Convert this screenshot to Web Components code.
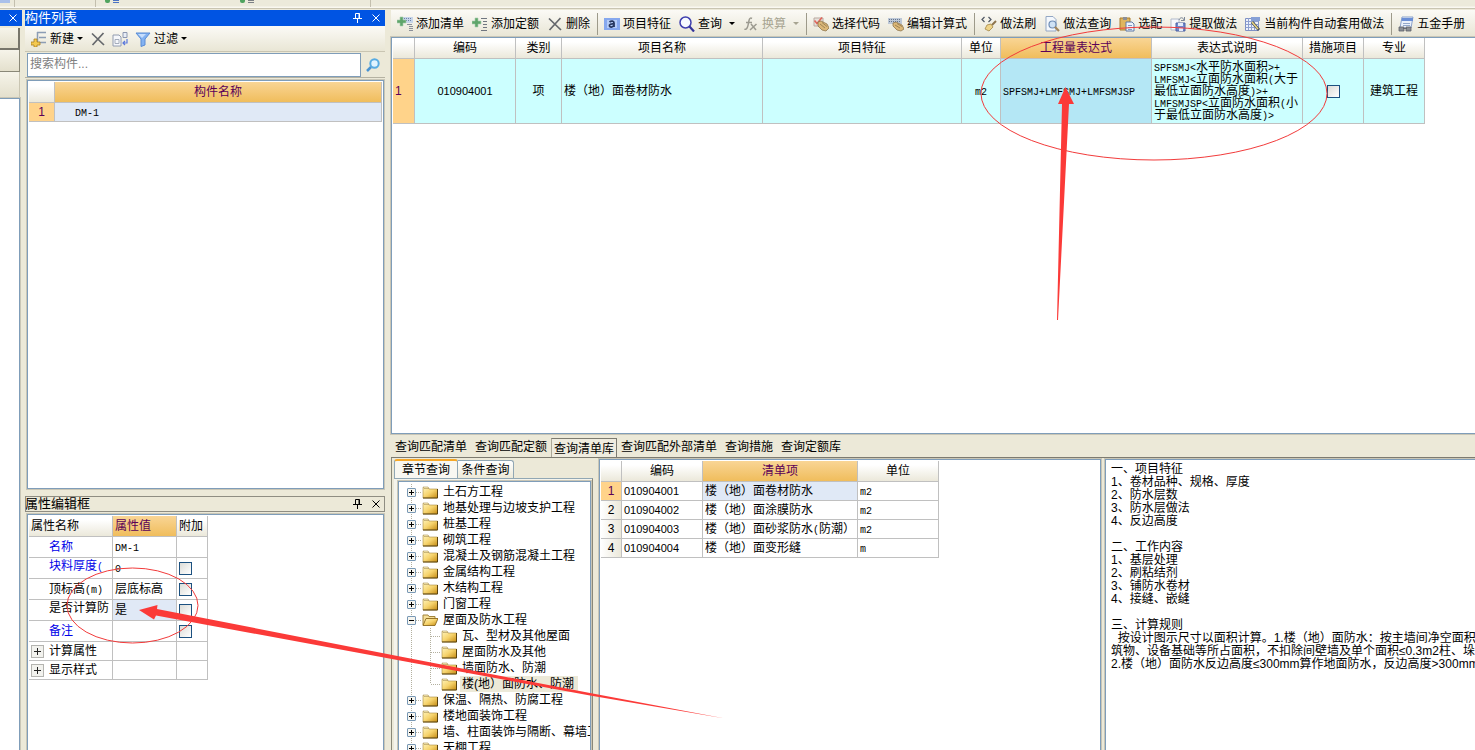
<!DOCTYPE html>
<html lang="zh-CN">
<head>
<meta charset="utf-8">
<title>构件做法</title>
<style>
html, body { height: 100%; }
body { margin: 0; overflow: hidden; background: #ece9d8; color: #000; font: 12px/16px "Liberation Sans", "Noto Sans CJK SC", sans-serif; }
</style>
</head>
<body>
<app-shell></app-shell>
<script>
const SHARED = `
*{box-sizing:border-box}
:host{display:block}
button,input{font:inherit;color:inherit;margin:0;padding:0;border:0;background:none;border-radius:0;outline:0}
button{white-space:nowrap}
code{font:10px/0 "Liberation Mono","Noto Sans CJK SC",monospace}
table{border-collapse:separate;border-spacing:0;table-layout:fixed}
th,td{font-weight:400;padding:0 2px;border-right:1px solid #c0c0c0;border-bottom:1px solid #c0c0c0;overflow:hidden;white-space:nowrap;text-align:left}
thead th{height:21px;text-align:center;background:linear-gradient(#fff 20%,#ebe8da)}
thead th.on{background:linear-gradient(#f9d595,#f0bd5c);color:#5a0058}
tbody th{text-align:center;background:linear-gradient(90deg,#fff,#ebe8da)}
tbody th.on{background:#ffd38a;color:#5a0058}
td.sel{background:#e0e9f6}
.frame{background:#fff;border:1px solid #7f9db9;outline:1px solid #c9c6b6;overflow:hidden}
input[type=checkbox]{appearance:none;display:block;width:13px;height:13px;border:1px solid #1c5180;background:linear-gradient(135deg,#dcdcd7,#fff)}
`;

const ICONS = {
  addList: '<path d="M6 1h10v6H6z" fill="#c6d5ea"/><path d="M7 2.5h8M7 4.5h8" stroke="#6d82a8" stroke-dasharray="1 1"/><path d="M3 1h3v3h3v3H6v3H3V7H0V4h3z" fill="#5fa56a" stroke="#a9cfae" stroke-width=".6"/><path d="M10 8.5h5M12 10.5h4M12 12.500h4M12 14.500h4" stroke="#8b8f98"/>',
  addQuota: '<path d="M3 2h3v3h3v3H6v3H3V8H0V5h3z" fill="#5fa56a" stroke="#a9cfae" stroke-width=".6"/><path d="M9 2.500h6M11 5.500h4M11 8.500h4M11 11.500h4M9 14.500h6" stroke="#707680"/>',
  del: '<path d="M2 2.500 14 14M13.500 2 2.500 14" stroke="#65686c" stroke-width="1.700" fill="none"/>',
  feature: '<path d="M0 2h16v12H0z" fill="#86a8ee"/><path d="M3 4h10v8H3z" fill="#b5ccf7"/><path d="M5.500 6c2-1.500 4.500-1 4.500 1v4M10 8C7 7.500 5 8.500 5.500 10s3 1.500 4.500-.5" fill="none" stroke="#26375f" stroke-width="1.800"/>',
  find: '<circle cx="6.500" cy="6.500" r="5.500" fill="#f7faff" stroke="#3f3fae" stroke-width="1.500"/><path d="m10.500 10.500 4.500 5" stroke="#34349a" stroke-width="2.200"/>',
  fx: '<path d="M9 2.500C6.500 1 6 4 5.500 7S4 14.500 1.500 13M3 6.500h6M8 8l5 6M13.500 8 7 14" fill="none" stroke="#9c9a90" stroke-width="1.500"/>',
  pick: '<path d="M1 2h9v8H1z" fill="#e6e2dc" stroke="#b9a9a0"/><path d="m1.500 4.500 2.500 3 5-6" fill="none" stroke="#e2655a" stroke-width="1.600"/><path d="m5 6 3-1 6 3 2 4-3 3-4-1-4-4z" fill="#dcb878" stroke="#8f764b" stroke-width=".8"/><path d="m7 8 5 4M9 6.500l5 4" stroke="#8f764b" stroke-width=".8"/>',
  edit: '<path d="M0 2h14v6H0z" fill="#bdc8d7"/><path d="M1 3.500h12M1 5.500h12" stroke="#66758d" stroke-dasharray="1 1"/><path d="m5 7 3-1 6 3 2 4-3 2-4-1-4-4z" fill="#dcb878" stroke="#8f764b" stroke-width=".8"/><path d="m7 9 5 3M9 7.500l5 3" stroke="#8f764b" stroke-width=".8"/>',
  brush: '<path d="M3.500 1 1 3.500 3.500 6M7.500 1 10 3.500 7.500 6" fill="none" stroke="#4e5663" stroke-width="1.200"/><path d="m15 5-4 4" stroke="#8d744c" stroke-width="2"/><path d="m6 9 4-1 2 3-4 4-4-2z" fill="#efd489" stroke="#a28544" stroke-width=".8"/>',
  look: '<path d="M2 .5h7l3 3V15H2z" fill="#f4f8fd" stroke="#93a7c4"/><circle cx="8.500" cy="8.500" r="3.500" fill="#cfe2f5" stroke="#6e8db5" stroke-width="1.200"/><path d="m11 11 4 4" stroke="#a2855b" stroke-width="2.200"/>',
  match: '<path d="M1 2h10v12H1z" fill="#dfb55d" stroke="#a97c2f"/><path d="M4 1h4v3H4z" fill="#8c8f96"/><path d="M7 6h6l2 2v7H7z" fill="#eef4fc" stroke="#5f7ba8"/><path d="M9 9.500h4M9 11.500h4M9 13.500h4" stroke="#7d99c5"/>',
  extract: '<path d="M1 3h8v11H1z" fill="#f6f8fc" stroke="#b1bacb"/><path d="M6 7h9v8H6z" fill="#6f88cf" stroke="#4c62a3"/><path d="M8 7h5v3H8zM9 12h4v3H9z" fill="#e4ebfa"/><path d="M9 4c1-3 4-3 5 0M14.500 1v3.500H11" fill="none" stroke="#7c8797"/>',
  auto: '<path d="M.5 2.500h13v12H.5z" fill="#eef2fb" stroke="#7e90c4"/><path d="M.5 5.500h13M.5 8.500h13M.5 11.500h13M3.500 2v12M6.500 2v12M9.500 2v12" stroke="#8ea0d0"/><path d="M6 1h9v4H6z" fill="#86a0d6"/><path d="m7 6 7 8" stroke="#4a5161" stroke-width="3"/><path d="m7 6 6 7" stroke="#ead57f" stroke-width="1.500"/>',
  manual: '<path d="M4 1h11l-2 11H2z" fill="#e9f0fb" stroke="#8ba2cb"/><path d="M4 2h11v3H3.500z" fill="#6b8fd6"/><path d="M5 7.500h7M5 9.500h7" stroke="#92a7cb"/><path d="M1 11h5v4H1zM8 11h5v4H8zM5 12.500h4" fill="#8a8e94" stroke="#5d6168" stroke-width=".8"/>',
  fresh: '<path d="M6 1.500h9M8 6.500h7M8 11.500h7M6.500 1v11" fill="none" stroke="#8c9db5" stroke-width="1.500"/><path d="M3 8h3v3h3v3H6v2H3v-2H0v-3h3z" fill="#f4c950" stroke="#a98121" stroke-width=".8"/>',
  copy: '<path d="M1 4h6l2 2v9H1z" fill="#f5f7fb" stroke="#929cb0"/><path d="M3 8.500h4v4H3z" fill="none" stroke="#a4acbb"/><path d="M11 1.500h4v5h-4z" fill="#e8edf6" stroke="#8d98b0"/><path d="M15 8v4h-4m2-2-2 2 2 2" fill="none" stroke="#5a78dc" stroke-width="1.200"/>',
  filter: '<path d="M1 2h14l-5 6v6l-4 1.500V8z" fill="#83b2f1" stroke="#5a8cd4"/><path d="M3 3h8L7 7z" fill="#c7defd"/>',
  search: '<circle cx="9.500" cy="6.500" r="4.200" fill="#dff3ff" stroke="#57abe2" stroke-width="2"/><path d="m6 10-4 4" stroke="#4a94d2" stroke-width="2.500"/>',
  folder: '<path d="M1 3.500h5l1 1.500h8.500v9H1z" fill="url(#g)" stroke="#a98c42" stroke-width=".6"/><path d="M1 3h5l1 1.500H2z" fill="#fff2bd" stroke="#a79056" stroke-width=".6"/><path d="M15.500 5v9H1" fill="none" stroke="#5b430d"/>',
  open: '<path d="M1 13V3h5l1 1.500h6V7" fill="#f5df98" stroke="#a1843c"/><path d="m1 13.500 3-7h12l-3 7z" fill="url(#g)" stroke="#8d6a1c" stroke-width=".9"/>',
  pin: '<path d="M5.500 3.500h4v5h-4zM3 8.500h9M7.500 9v4M9 3.500v5" fill="none" stroke="currentColor" stroke-width="1"/>',
  close: '<path d="m4.500 4.500 7 7M11.500 4.500l-7 7" fill="none" stroke="currentColor"/>'
};

function define(name, css, html) {
  customElements.define(name, class extends HTMLElement {
    constructor() { super(); this.attachShadow({ mode: 'open' }); }
    connectedCallback() {
      if (this.shadowRoot.firstChild) return;
      const t = document.createElement('template');
      t.innerHTML = `<style>${SHARED}${css}</style>${typeof html === 'function' ? html(this) : html}`;
      this.shadowRoot.append(t.content.cloneNode(true));
    }
  });
}

define('ui-icon', ':host{display:block;flex:none;width:16px;height:16px}svg{display:block}',
  el => `<svg width="16" height="16" viewBox="0 0 16 16" fill="none" aria-hidden="true"><defs><linearGradient id="g" x1="0" y1="0" x2="1" y2="1"><stop offset="0" stop-color="#fff4ba"/><stop offset=".5" stop-color="#f6d36c"/><stop offset="1" stop-color="#c48a12"/></linearGradient></defs>${ICONS[el.getAttribute('name')] || ''}</svg>`);

define('tool-button', `
:host{flex:none}
button{display:flex;align-items:center;gap:3px;height:24px;padding:0 4px}
button:disabled{color:#a7a491}
.caret{margin-left:4px;border:3px solid transparent;border-top-color:currentColor;border-bottom:0}
:host([tight]) .caret{margin-left:0}
:host([name]) button{padding:0 3px;gap:0}`,
  el => `<button ${el.hasAttribute('disabled') ? 'disabled' : ''} aria-label="${el.textContent || el.getAttribute('name')}"><ui-icon name="${el.getAttribute('icon')}"></ui-icon><slot></slot>${el.hasAttribute('menu') ? '<span class="caret"></span>' : ''}</button>`);

define('tool-separator', ':host{flex:none;width:1px;height:22px;margin:0 2px 0 3px;background:#9d9a8a}', '');

define('panel-title', `
:host{flex:none;display:flex;align-items:center;height:16px;overflow:hidden;font-size:13px;color:#000;outline:1px solid #8f8d82;outline-offset:-1px}
:host([active]){background:#0054e3;color:#fff;outline:0}
span{flex:1;white-space:nowrap}
button{width:18px;height:16px;display:flex;justify-content:center}`,
  el => `<span><slot></slot></span>${el.hasAttribute('pinned') ? '<button aria-label="固定"><ui-icon name="pin"></ui-icon></button>' : ''}<button aria-label="关闭"><ui-icon name="close"></ui-icon></button>`);

define('top-strip', `
:host{display:flex;height:9px;border-bottom:1px solid #c9c5b2;background:linear-gradient(#eceadb 70%,#fdfcf7);overflow:hidden}
i{flex:none;height:7px}
.a{width:10px;height:3px;background:#a9c0ea}.l{width:1px;background:#c3bfae}
.p{width:5px;height:3px;background:#4fa35f;border-radius:0 0 2px 2px}.b{width:6px;height:3px;margin-left:3px;border-bottom:1px solid #4a72c4;border-top:1px solid #4a72c4}
.g{border-color:#7b7f85}`,
  `<i class="a"></i><i class="l" style="margin-left:4px"></i><i class="l" style="margin-left:80px"></i><i class="p" style="margin-left:9px"></i><i class="b"></i><i class="p" style="margin-left:121px"></i><i class="b g"></i><i class="l" style="margin-left:116px"></i>`);

define('side-strip', `
:host{display:flex;flex-direction:column;min-height:0}
.bar{height:22px;margin:0 2px 0 0;border-right:1px solid #8a8878;border-bottom:1px solid #8a8878;background:linear-gradient(#f6f4ea,#e4e0cd)}
.first{margin-top:2px;border-width:2px;border-color:#77756a;border-top:0;border-left:0;border-style:solid}
.tall{height:26px;border-color:#c9c5b2}
.frame{flex:1;margin-right:2px;border-left:0;border-bottom:0}`,
  `<panel-title active></panel-title><div class="bar first"></div><div class="bar"></div><div class="bar tall"></div><div class="frame"></div>`);

define('component-list', `
:host{display:flex;flex-direction:column;min-height:0}
nav{display:flex;align-items:center;height:26px;background:linear-gradient(#fbfaf6,#e9e6d5);border-bottom:1px solid #c9c5b2;padding:0 2px}
form{display:flex;height:26px;margin:0;border-bottom:1px solid #b5b2a2;padding:1px 0 0 2px}
input{flex:1;min-width:0;height:24px;background:#fff;border:1px solid #7f9db9;padding:0 2px 2px}
input::placeholder{color:#808080;opacity:1}
form button{width:24px;display:flex;align-items:center;justify-content:center}
.frame{flex:1;margin:2px 1px 1px 2px;padding:1px}
table{width:100%}
td{height:19px;padding-left:20px}`,
  `<panel-title active pinned>构件列表</panel-title>
  <nav><tool-button icon="fresh" menu tight>新建</tool-button><tool-button icon="del" name="删除构件"></tool-button><tool-button icon="copy" name="复制构件"></tool-button><tool-button icon="filter" menu tight>过滤</tool-button></nav>
  <form><input type="text" placeholder="搜索构件..." aria-label="搜索构件"><button type="button" aria-label="搜索"><ui-icon name="search"></ui-icon></button></form>
  <div class="frame"><table><colgroup><col style="width:26px"><col></colgroup>
  <thead><tr><th></th><th class="on" scope="col">构件名称</th></tr></thead>
  <tbody><tr><th class="on" scope="row">1</th><td class="sel"><code>DM-1</code></td></tr></tbody></table></div>`);

const prop = (name, value, o = {}) => `<tr><td class="n ${o.link ? 'link' : ''} ${o.top ? 'top' : ''}">${name}</td><td class="${o.sel ? 'sel' : ''}">${value}</td><td>${o.check ? `<input type="checkbox" aria-label="附加">` : ''}</td></tr>`;
const group = name => `<tr class="g"><td><div><button aria-label="展开"></button>${name}</div></td><td></td><td></td></tr>`;
define('property-editor', `
:host{display:flex;flex-direction:column;min-height:0}
.frame{flex:1;margin:2px 1px 0 2px;padding:1px;border-bottom:0}
table{width:179px}
thead th{text-align:left}
td{height:21px}
.g td{height:19px}
.n{padding-left:20px}
.top{vertical-align:top;line-height:16px}
.link{color:#0000e8}
.g div{display:flex;align-items:center;gap:5px}
.g button{width:13px;height:13px;border:1px solid #b4b4b0;background:linear-gradient(#222,#222) center/7px 1px no-repeat,linear-gradient(#222,#222) center/1px 7px no-repeat,#f2f2ee}`,
  `<panel-title pinned>属性编辑框</panel-title>
  <div class="frame"><table><colgroup><col style="width:84px"><col style="width:64px"><col style="width:31px"></colgroup>
  <thead><tr><th scope="col">属性名称</th><th class="on" scope="col">属性值</th><th scope="col">附加</th></tr></thead>
  <tbody>${prop('名称', '<code>DM-1</code>', { link: 1 })}${prop('块料厚度<code>(</code>', '<code>0</code>', { link: 1, top: 1, check: 1 })}${prop('顶标高<code>(m)</code>', '层底标高', { check: 1 })}${prop('是否计算防', '是', { top: 1, sel: 1, check: 1 })}${prop('备注', '', { link: 1, check: 1 })}${group('计算属性')}${group('显示样式')}</tbody></table></div>`);

define('main-toolbar', `
:host{flex:none;display:flex;align-items:center;height:27px;padding:0 2px;overflow:hidden;background:linear-gradient(#fbfaf6,#e8e5d4)}`,
  `<tool-button icon="addList">添加清单</tool-button><tool-button icon="addQuota">添加定额</tool-button><tool-button icon="del">删除</tool-button><tool-separator></tool-separator>
  <tool-button icon="feature">项目特征</tool-button><tool-button icon="find" menu>查询</tool-button><tool-button icon="fx" menu disabled>换算</tool-button><tool-separator></tool-separator>
  <tool-button icon="pick">选择代码</tool-button><tool-button icon="edit">编辑计算式</tool-button><tool-separator></tool-separator>
  <tool-button icon="brush">做法刷</tool-button><tool-button icon="look">做法查询</tool-button><tool-button icon="match">选配</tool-button><tool-button icon="extract">提取做法</tool-button><tool-button icon="auto">当前构件自动套用做法</tool-button><tool-separator></tool-separator>
  <tool-button icon="manual">五金手册</tool-button>`);

define('bill-grid', `
:host{min-height:0;display:flex}
.frame{flex:1;padding:0 1px;border-right:0}
table{width:1032px}
td,tbody th{height:65px}
td{background:#ccffff}
td.c{text-align:center}
td.cur{background:#b4e7f5}
td.d{white-space:normal;line-height:12px}
tbody th.on{text-align:left}
input[type=checkbox]{margin:0 auto}`,
  `<div class="frame"><table><colgroup>${[22, 101, 46, 201, 199, 39, 151, 151, 61, 61].map(w => `<col style="width:${w}px">`).join('')}</colgroup>
  <thead><tr><th></th><th scope="col">编码</th><th scope="col">类别</th><th scope="col">项目名称</th><th scope="col">项目特征</th><th scope="col">单位</th><th scope="col" class="on">工程量表达式</th><th scope="col">表达式说明</th><th scope="col">措施项目</th><th scope="col">专业</th></tr></thead>
  <tbody><tr><th class="on" scope="row">1</th><td class="c" style="font-size:11px">010904001</td><td class="c">项</td><td>楼（地）面卷材防水</td><td></td><td class="c"><code>m2</code></td><td class="cur"><code>SPFSMJ+LMFSMJ+LMFSMJSP</code></td>
  <td class="d"><code>SPFSMJ&lt;</code>水平防水面积<code>&gt;+</code><br><code>LMFSMJ&lt;</code>立面防水面积<code>(</code>大于<br>最低立面防水高度<code>)&gt;+</code><br><code>LMFSMJSP&lt;</code>立面防水面积<code>(</code>小<br>于最低立面防水高度<code>)&gt;</code></td><td><input type="checkbox" aria-label="措施项目"></td><td class="c">建筑工程</td></tr></tbody></table></div>`);

define('query-tabs', `
:host{flex:none;display:flex;align-items:flex-end;height:24px;border-bottom:1px solid #7d7b70;overflow:hidden}
button{flex:none;height:20px;padding:0 4px}
button[aria-selected=true]{height:19px;padding:2px 2px 0;border:1px solid #7d7b70;border-bottom:0;border-left-color:#aca899;background:#efecdf}`,
  `<button role="tab">查询匹配清单</button><button role="tab">查询匹配定额</button><button role="tab" aria-selected="true">查询清单库</button><button role="tab">查询匹配外部清单</button><button role="tab">查询措施</button><button role="tab">查询定额库</button>`);

define('tree-node', `
:host{display:block}
.row{display:flex;align-items:center;height:16px;white-space:nowrap;background:repeating-linear-gradient(#b3b09f 0 1px,transparent 1px 2px) 12px 0/1px 100% no-repeat}
.exp{flex:none;width:9px;height:9px;margin-left:8px;border:1px solid #7898b5;border-radius:1px;background:linear-gradient(#000,#000) center/5px 1px no-repeat,linear-gradient(#000,#000) center/1px 5px no-repeat,#f6f5ef}
.open .exp{background:linear-gradient(#000,#000) center/5px 1px no-repeat,#f6f5ef}
.dots{flex:none;width:5px;height:1px;margin-right:1px;background:repeating-linear-gradient(90deg,#b3b09f 0 1px,transparent 1px 2px)}
.leaf{background:repeating-linear-gradient(#b3b09f 0 1px,transparent 1px 2px) 12px 0/1px 100% no-repeat,repeating-linear-gradient(#b3b09f 0 1px,transparent 1px 2px) 31px 0/1px 100% no-repeat}
.leaf.sel{background-size:1px 100%,1px 50%}
.leaf .dots{width:9px;margin-left:32px}
.t{margin-left:3px;padding:0 2px;line-height:16px}
.sel .t{background:#ece9d8;padding-right:4px}`,
  el => {
    const leaf = el.hasAttribute('leaf'), open = el.hasAttribute('open');
    return `<div class="row ${leaf ? 'leaf' : ''} ${open ? 'open' : ''} ${el.hasAttribute('selected') ? 'sel' : ''}">${leaf ? '' : '<button class="exp" aria-label="展开"></button>'}<span class="dots"></span><ui-icon name="${open ? 'open' : 'folder'}"></ui-icon><span class="t"><slot></slot></span></div>`;
  });

define('chapter-tree', `
:host{display:flex;flex-direction:column;min-height:0;padding:1px 2px 0 2px;border-left:1px solid #8a8878}
.tabs{display:flex;align-items:flex-end;height:19px}
.tabs button{height:18px;width:56px;border:1px solid #91a7b4;border-bottom:0;border-left:0;border-radius:0 3px 0 0;background:linear-gradient(#fff,#ece9d8)}
.tabs button[aria-selected=true]{width:64px;height:19px;border-top:2px solid #f6a828;border-left:1px solid #91a7b4;border-radius:3px 3px 0 0;background:#f8f7f1}
.page{flex:1;min-height:0;display:flex;border-right:1px solid #8a8878;border-top:1px solid #91a7b4;padding:2px 1px 0 4px;background:#f5f4ec}
.frame{flex:1;min-width:0;padding-top:2px;border-bottom:0}`,
  `<div class="tabs" role="tablist"><button role="tab" aria-selected="true">章节查询</button><button role="tab">条件查询</button></div>
  <div class="page"><div class="frame">${['土石方工程', '地基处理与边坡支护工程', '桩基工程', '砌筑工程', '混凝土及钢筋混凝土工程', '金属结构工程', '木结构工程', '门窗工程'].map(t => `<tree-node>${t}</tree-node>`).join('')}<tree-node open>屋面及防水工程</tree-node><tree-node leaf>瓦、型材及其他屋面</tree-node><tree-node leaf>屋面防水及其他</tree-node><tree-node leaf>墙面防水、防潮</tree-node><tree-node leaf selected>楼(地）面防水、防潮</tree-node>${['保温、隔热、防腐工程', '楼地面装饰工程', '墙、柱面装饰与隔断、幕墙工程', '天棚工程'].map(t => `<tree-node>${t}</tree-node>`).join('')}</div></div>`);

const result = (n, code, name, unit) => `<tr><th scope="row" class="${n === 1 ? 'on' : ''}">${n}</th><td class="k">${code}</td><td class="${n === 1 ? 'sel' : ''}">${name}</td><td><code>${unit}</code></td></tr>`;
define('result-grid', `
:host{display:flex;min-height:0;min-width:0}
.frame{flex:1;padding:1px;border-bottom:0}
table{width:338px}
td{height:19px}
.k{font-size:11px}`,
  `<div class="frame"><table><colgroup><col style="width:21px"><col style="width:81px"><col style="width:155px"><col style="width:81px"></colgroup>
  <thead><tr><th></th><th scope="col">编码</th><th scope="col" class="on">清单项</th><th scope="col">单位</th></tr></thead>
  <tbody>${result(1, '010904001', '楼（地）面卷材防水', 'm2')}${result(2, '010904002', '楼（地）面涂膜防水', 'm2')}${result(3, '010904003', '楼（地）面砂浆防水<code>(</code>防潮）', 'm2')}${result(4, '010904004', '楼（地）面变形缝', 'm')}</tbody></table></div>`);

define('rule-text', `
:host{display:flex;min-height:0;min-width:0}
.frame{flex:1;min-width:0;padding:3px 0 0 5px;border-right:0;border-bottom:0}
p{margin:0 0 13px;line-height:13px;white-space:pre}`,
  `<div class="frame"><p>一、项目特征
1、卷材品种、规格、厚度
2、防水层数
3、防水层做法
4、反边高度</p><p>二、工作内容
1、基层处理
2、刷粘结剂
3、铺防水卷材
4、接缝、嵌缝</p><p>三、计算规则
  按设计图示尺寸以面积计算。1.楼（地）面防水：按主墙间净空面积
筑物、设备基础等所占面积，不扣除间壁墙及单个面积≤0.3m2柱、垛、
2.楼（地）面防水反边高度≤300mm算作地面防水，反边高度&gt;300mm按</p></div>`);

/* Red mark-up drawn freely over the window. */
define('markup-layer', `
:host{position:absolute;inset:0;overflow:hidden;pointer-events:none}
svg{display:block}`,
  `<svg width="1475" height="750" viewBox="0 0 1475 750" aria-hidden="true"><g fill="none" stroke="#f23b3b"><ellipse cx="1154" cy="93.500" rx="173" ry="66.500"/><ellipse cx="132.500" cy="605.500" rx="65.500" ry="37.500"/></g><g fill="#fb3a38"><path d="m1065.500 87 8.500 17h-5l-11 216h-1L1062 104h-4z"/><path d="m139 610 18.500-5-.5 4L400 656.500 590 693l135 25.500-135-23-190-35L156 615.500l-2 4z"/></g></svg>`);

define('app-shell', `
:host{position:relative;display:flex;flex-direction:column;height:100vh;overflow:hidden}
.body{flex:1;min-height:0;display:grid;grid-template-columns:22px 360px minmax(0,1fr);padding-top:1px}
.left{display:flex;flex-direction:column;min-height:0;margin-left:3px;width:360px}
component-list{flex:480}
property-editor{flex:254;margin-top:6px}
.main{display:flex;flex-direction:column;min-height:0;margin-left:9px;background:#ece9d8}
.main bill-grid{flex:398}
.lower{flex:292;min-height:0;display:grid;grid-template-columns:204px minmax(0,502fr) minmax(0,370fr);gap:0 4px}
result-grid,rule-text{padding-top:1px}`,
  `<top-strip></top-strip>
  <div class="body"><side-strip></side-strip>
  <div class="left"><component-list></component-list><property-editor></property-editor></div>
  <div class="main"><main-toolbar></main-toolbar><bill-grid></bill-grid><query-tabs></query-tabs>
  <div class="lower"><chapter-tree></chapter-tree><result-grid></result-grid><rule-text></rule-text></div></div></div>
  <markup-layer></markup-layer>`);
</script>
</body>
</html>
